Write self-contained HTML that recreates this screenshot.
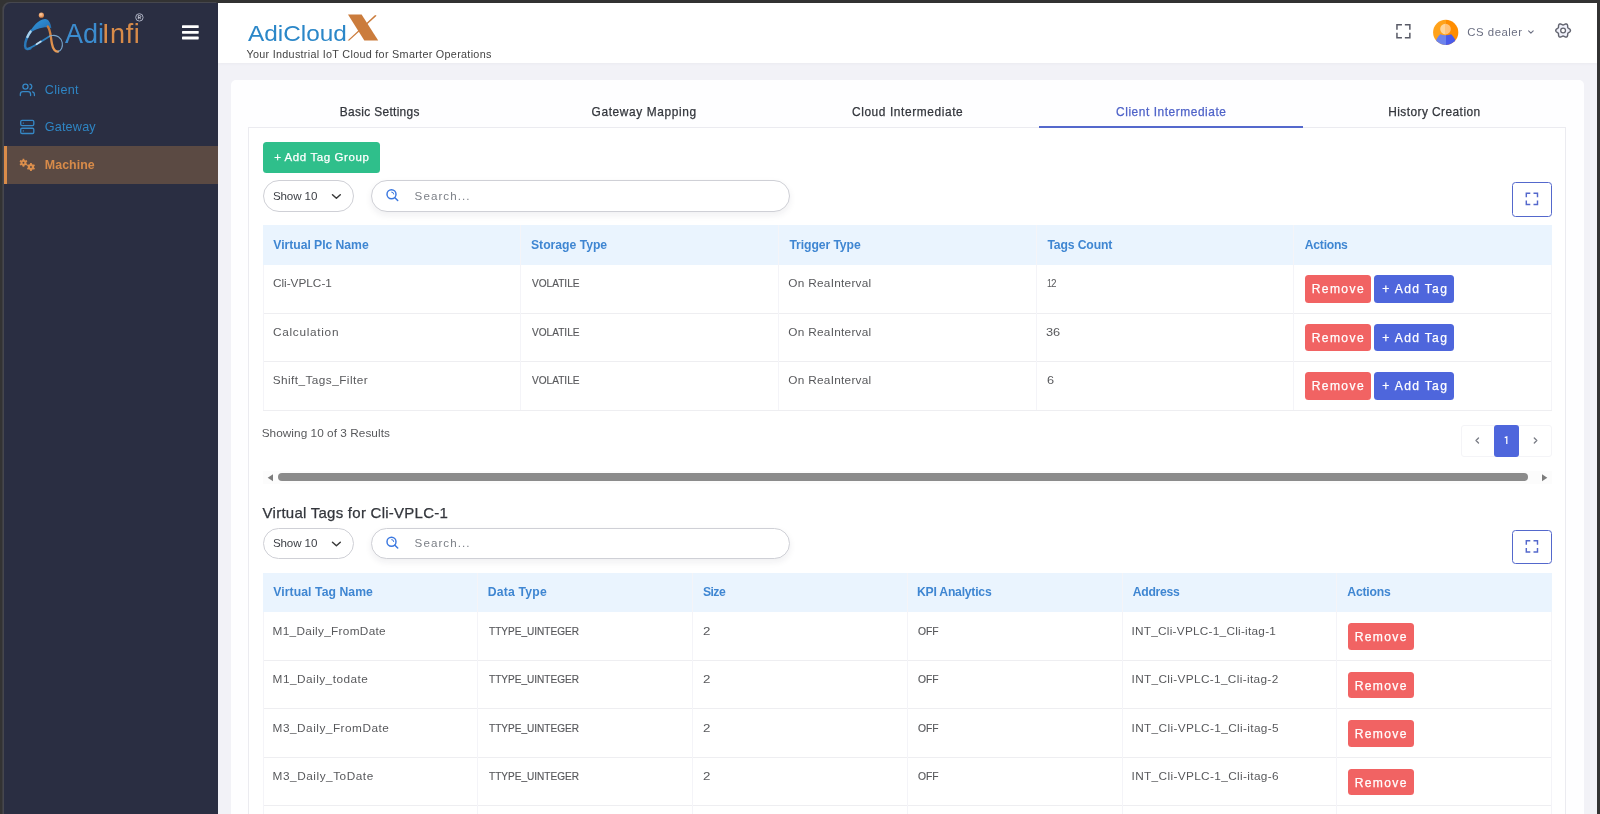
<!DOCTYPE html>
<html lang="en">
<head>
<meta charset="utf-8">
<title>AdiCloudX - Machine</title>
<style>
*{box-sizing:border-box;margin:0;padding:0}
html,body{width:1600px;height:814px;overflow:hidden;background:#333333;font-family:"Liberation Sans",sans-serif}
.abs,.t,.b{position:absolute}
.t{white-space:pre;line-height:1;font-family:"Liberation Sans",sans-serif}
.t.s{-webkit-text-stroke:0.25px currentColor}
.t.x{-webkit-text-stroke:0.18px currentColor}
#app{position:absolute;left:210px;top:2.5px;width:1386.5px;height:812px;background:#f2f2f7}
#sidebar{position:absolute;left:3.7px;top:2.8px;width:214.3px;height:812px;background:#2a2e42;border-radius:7px 0 0 0;box-shadow:-1.6px -0.9px 0 0 #46474e}
#active{position:absolute;left:3.5px;top:146px;width:214.5px;height:37.6px;background:#5b4a43}
#activebar{position:absolute;left:3.5px;top:146px;width:3.7px;height:37.6px;background:#d98c4a}
#header{position:absolute;left:218px;top:2.5px;width:1378.5px;height:60px;background:#fff;box-shadow:0 1px 3px rgba(40,40,80,0.04)}
#card{position:absolute;left:231px;top:80px;width:1352.7px;height:760px;background:#fefeff;border-radius:5px}
#panel{position:absolute;left:248px;top:127px;width:1318px;height:720px;border:1px solid #ebebf0;background:#fff}
#tabline{position:absolute;left:1039px;top:126px;width:264px;height:2px;background:#5468cc}
.btn{position:absolute;border-radius:3.5px}
.pill{position:absolute;border:1px solid #cfd0d6;border-radius:16px;background:#fff}
.fs{position:absolute;border:1px solid #5468cc;border-radius:3.5px;background:#fff}
.th{position:absolute;background:#eaf4fe}
.hl{position:absolute;height:1px;background:#eeeef1}
.vl{position:absolute;width:1px;background:#f4f4f8}
</style>
</head>
<body>
<div id="app"></div>
<div id="sidebar"></div>
<div id="active"></div><div id="activebar"></div>
<div id="header"></div>
<div id="card"></div>
<div id="panel"></div>
<div id="tabline"></div>
<div class="btn" style="left:262.50px;top:142.20px;width:117.50px;height:30.70px;background:#2fbf8b"></div>
<div class="pill" style="left:262.50px;top:180.25px;width:91.10px;height:31.35px;"></div>
<div class="pill" style="left:371.25px;top:180.25px;width:418.25px;height:31.35px;box-shadow:0 3px 7px rgba(30,30,60,0.07)"></div>
<div class="fs" style="left:1512.00px;top:182.00px;width:39.80px;height:34.80px;"></div>
<div class="pill" style="left:262.50px;top:527.75px;width:91.10px;height:31.35px;"></div>
<div class="pill" style="left:371.25px;top:527.75px;width:418.25px;height:31.35px;box-shadow:0 3px 7px rgba(30,30,60,0.07)"></div>
<div class="fs" style="left:1512.00px;top:529.50px;width:39.80px;height:34.80px;"></div>
<div class="th" style="left:263.00px;top:225.30px;width:1288.60px;height:39.40px;"></div>
<div class="hl" style="left:263.0px;top:312.70px;width:1288.60px"></div>
<div class="hl" style="left:263.0px;top:361.20px;width:1288.60px"></div>
<div class="hl" style="left:263.0px;top:409.70px;width:1288.60px"></div>
<div class="vl" style="left:262.50px;top:264.70px;height:145.50px"></div>
<div class="vl" style="left:520.22px;top:225.30px;height:184.90px"></div>
<div class="vl" style="left:777.94px;top:225.30px;height:184.90px"></div>
<div class="vl" style="left:1035.66px;top:225.30px;height:184.90px"></div>
<div class="vl" style="left:1293.38px;top:225.30px;height:184.90px"></div>
<div class="vl" style="left:1551.10px;top:264.70px;height:145.50px"></div>
<div class="btn" style="left:1304.85px;top:275.20px;width:65.95px;height:27.70px;background:#f16363"></div>
<div class="btn" style="left:1374.40px;top:275.20px;width:79.60px;height:27.70px;background:#4e66dc"></div>
<div class="btn" style="left:1304.85px;top:323.70px;width:65.95px;height:27.70px;background:#f16363"></div>
<div class="btn" style="left:1374.40px;top:323.70px;width:79.60px;height:27.70px;background:#4e66dc"></div>
<div class="btn" style="left:1304.85px;top:372.20px;width:65.95px;height:27.70px;background:#f16363"></div>
<div class="btn" style="left:1374.40px;top:372.20px;width:79.60px;height:27.70px;background:#4e66dc"></div>
<div class="abs" style="left:1461.25px;top:424.50px;width:90.50px;height:32.50px;border:1px solid #f4f4f7;border-radius:3px;background:#fff"></div>
<div class="abs" style="left:1493.75px;top:424.50px;width:25.50px;height:32.50px;background:#4e66dc;border-radius:3px"></div>
<div class="abs" style="left:263.00px;top:470.50px;width:1288.60px;height:13.50px;background:#fcfcfc"></div>
<div class="abs" style="left:277.50px;top:473.25px;width:1250.50px;height:8.00px;background:#8b8b8b;border-radius:4px"></div>
<svg class="abs" style="left:266px;top:472px" width="10" height="11" viewBox="0 0 10 11"><path d="M7.0 2.3 L7.0 9.3 L1.7 5.8 Z" fill="#7c7c7c"/></svg>
<svg class="abs" style="left:1540px;top:472px" width="10" height="11" viewBox="0 0 10 11"><path d="M2 2.3 L2 9.3 L7.3 5.8 Z" fill="#7c7c7c"/></svg>
<div class="th" style="left:263.00px;top:572.70px;width:1288.60px;height:39.10px;"></div>
<div class="hl" style="left:263.0px;top:659.80px;width:1288.60px"></div>
<div class="hl" style="left:263.0px;top:708.30px;width:1288.60px"></div>
<div class="hl" style="left:263.0px;top:756.80px;width:1288.60px"></div>
<div class="hl" style="left:263.0px;top:805.30px;width:1288.60px"></div>
<div class="vl" style="left:262.50px;top:611.80px;height:218.20px"></div>
<div class="vl" style="left:477.27px;top:572.70px;height:257.30px"></div>
<div class="vl" style="left:692.03px;top:572.70px;height:257.30px"></div>
<div class="vl" style="left:906.80px;top:572.70px;height:257.30px"></div>
<div class="vl" style="left:1121.57px;top:572.70px;height:257.30px"></div>
<div class="vl" style="left:1336.33px;top:572.70px;height:257.30px"></div>
<div class="vl" style="left:1551.10px;top:611.80px;height:218.20px"></div>
<div class="btn" style="left:1348.00px;top:623.00px;width:65.60px;height:26.70px;background:#f16363"></div>
<div class="btn" style="left:1348.00px;top:671.50px;width:65.60px;height:26.70px;background:#f16363"></div>
<div class="btn" style="left:1348.00px;top:720.00px;width:65.60px;height:26.70px;background:#f16363"></div>
<div class="btn" style="left:1348.00px;top:768.50px;width:65.60px;height:26.70px;background:#f16363"></div>
<svg class="abs" style="left:0;top:0" width="1600" height="814" viewBox="0 0 1600 814" fill="none">
<defs>
<linearGradient id="gb" x1="0" y1="0" x2="1" y2="1"><stop offset="0" stop-color="#2f9be0"/><stop offset="0.55" stop-color="#2b7fc4"/><stop offset="1" stop-color="#1d5f99"/></linearGradient>
<linearGradient id="go" x1="0" y1="0" x2="0" y2="1"><stop offset="0" stop-color="#c9793a"/><stop offset="1" stop-color="#e89b55"/></linearGradient>
<radialGradient id="gd" cx="0.4" cy="0.35" r="0.7"><stop offset="0" stop-color="#ffd2a6"/><stop offset="1" stop-color="#d5783a"/></radialGradient>
<linearGradient id="av" x1="0" y1="0" x2="1" y2="0"><stop offset="0.5" stop-color="#ffa21a"/><stop offset="0.5" stop-color="#ff8d00"/></linearGradient>
<linearGradient id="avh" x1="0" y1="0" x2="1" y2="0"><stop offset="0.5" stop-color="#ffd59a"/><stop offset="0.5" stop-color="#ffc27a"/></linearGradient>
<linearGradient id="avb" x1="0" y1="0" x2="1" y2="0"><stop offset="0.5" stop-color="#6d83ec"/><stop offset="0.5" stop-color="#4a5bea"/></linearGradient>
<clipPath id="avc"><circle cx="1445.7" cy="32.4" r="12.6"/></clipPath>
</defs>
<circle cx="41.4" cy="15.2" r="2.6" fill="url(#gd)"/>
<path d="M29.3 33.2 C32.5 26.5 38.5 19.5 44.9 19.0 C48.6 18.8 50.6 23 51.4 28.2 C48.5 27.0 46 27.0 43.5 27.4 C38.5 28.2 33.5 30.3 29.3 33.2 Z" fill="url(#gb)"/>
<path d="M31.4 30.4 C27.6 35.5 24.9 41.5 25.1 46 C25.3 49.2 27.6 49.7 30.4 48.4" stroke="#2a78b8" stroke-width="2.5" stroke-linecap="round"/>
<path d="M30.6 31.6 C29.2 33.4 28.2 35.1 27.4 36.9" stroke="#bfe0f5" stroke-width="2.4" stroke-linecap="round" opacity="0.85"/>
<path d="M27.5 48.8 C33 47.5 41 41.5 49.5 36.2" stroke="#2f80be" stroke-width="1.7" stroke-linecap="round"/>
<path d="M36.5 44.2 C38 43.3 39.4 42.4 40.8 41.5" stroke="#cfe8f8" stroke-width="1.7" stroke-linecap="round" opacity="0.9"/>
<path d="M47.8 26.5 C51 31 50.6 38 52 44 C53 49.5 55.5 52 58 51.5" stroke="url(#go)" stroke-width="2.3" stroke-linecap="round"/>
<path d="M58 51.5 C61.5 50.8 63 46.5 62.2 42.5 C61.3 38 57 34.8 52.5 35.5 C50.5 35.8 49.5 36.2 49.5 36.2" stroke="#7fb0d8" stroke-width="1.1" stroke-linecap="round" opacity="0.9"/>
<circle cx="139.4" cy="17.4" r="3.7" stroke="#a9aec0" stroke-width="1"/>
<path d="M138.3 19.2 V15.6 H139.8 A1 1 0 0 1 139.8 17.6 H138.3 M139.6 17.6 L140.6 19.2" stroke="#d8dbe6" stroke-width="0.8"/>
<rect x="182" y="25.20" width="16.7" height="2.8" rx="0.6" fill="#ffffff"/>
<rect x="182" y="30.90" width="16.7" height="2.8" rx="0.6" fill="#ffffff"/>
<rect x="182" y="36.60" width="16.7" height="2.8" rx="0.6" fill="#ffffff"/>
<g transform="translate(19.7 82.1) scale(0.64)" stroke="#3688c6" stroke-width="2" stroke-linecap="round" stroke-linejoin="round"><path d="M17 21v-2a4 4 0 0 0-4-4H5a4 4 0 0 0-4 4v2"/><circle cx="9" cy="7" r="4"/><path d="M23 21v-2a4 4 0 0 0-3-3.87"/><path d="M16 3.13a4 4 0 0 1 0 7.75"/></g>
<g transform="translate(19.4 119.1) scale(0.655)" stroke="#3688c6" stroke-width="2" stroke-linecap="round" stroke-linejoin="round"><rect x="2" y="2" width="20" height="8" rx="2" ry="2"/><rect x="2" y="14" width="20" height="8" rx="2" ry="2"/><line x1="6" y1="6" x2="6.01" y2="6"/><line x1="6" y1="18" x2="6.01" y2="18"/></g>
<path d="M24.41 165.64 L24.26 166.82 L22.64 166.82 L22.49 165.64 L21.47 165.05 L20.37 165.51 L19.56 164.11 L20.51 163.39 L20.51 162.21 L19.56 161.49 L20.37 160.09 L21.47 160.55 L22.49 159.96 L22.64 158.78 L24.26 158.78 L24.41 159.96 L25.43 160.55 L26.53 160.09 L27.34 161.49 L26.39 162.21 L26.39 163.39 L27.34 164.11 L26.53 165.51 L25.43 165.05 Z M24.40 162.80 A0.95 0.95 0 1 0 22.50 162.80 A0.95 0.95 0 1 0 24.40 162.80 Z" fill="#dd8f4c" fill-rule="evenodd"/>
<path d="M31.94 169.94 L31.78 171.12 L30.12 171.12 L29.96 169.94 L28.90 169.33 L27.80 169.78 L26.97 168.34 L27.91 167.61 L27.91 166.39 L26.97 165.66 L27.80 164.22 L28.90 164.67 L29.96 164.06 L30.12 162.88 L31.78 162.88 L31.94 164.06 L33.00 164.67 L34.10 164.22 L34.93 165.66 L33.99 166.39 L33.99 167.61 L34.93 168.34 L34.10 169.78 L33.00 169.33 Z M31.90 167.00 A0.95 0.95 0 1 0 30.00 167.00 A0.95 0.95 0 1 0 31.90 167.00 Z" fill="#dd8f4c" fill-rule="evenodd"/>
<path d="M348 14.5 L361.6 14.5 L378.2 40.5 L364.3 40.5 Z" fill="#cb7c3c"/>
<path d="M375.1 14.9 L376.6 15.7 L349.3 40.6 L347.6 40.6 Z" fill="#cb7c3c"/>
<path d="M1396.95 29.75 V24.75 H1401.95 M1404.8500000000001 24.75 H1409.8500000000001 V29.75 M1409.8500000000001 32.65 V37.65 H1404.8500000000001 M1401.95 37.65 H1396.95 V32.65" stroke="#595b67" stroke-width="1.5" stroke-linejoin="miter"/>
<circle cx="1445.7" cy="32.4" r="12.6" fill="url(#av)"/>
<g clip-path="url(#avc)"><path d="M1440.2 34.3 Q1445.7 36 1451.2 34.3 Q1455.5 38 1457.5 47 L1434 47 Q1436 38 1440.2 34.3 Z" fill="url(#avb)"/></g>
<circle cx="1445.5" cy="29.1" r="5.3" fill="url(#avh)"/>
<path d="M1528.6 30.8 L1530.9 33.1 L1533.2 30.8" stroke="#6b6f82" stroke-width="1.1" stroke-linecap="round" stroke-linejoin="round"/>
<path d="M1570.47 30.50 L1570.43 30.82 L1570.32 31.13 L1570.14 31.43 L1569.91 31.70 L1569.63 31.95 L1569.33 32.17 L1569.02 32.37 L1568.73 32.55 L1568.46 32.72 L1568.22 32.89 L1568.03 33.07 L1567.89 33.27 L1567.79 33.49 L1567.73 33.74 L1567.70 34.03 L1567.69 34.35 L1567.68 34.70 L1567.66 35.06 L1567.62 35.43 L1567.54 35.79 L1567.42 36.13 L1567.26 36.44 L1567.04 36.69 L1566.78 36.88 L1566.49 37.01 L1566.16 37.07 L1565.82 37.06 L1565.46 36.99 L1565.11 36.88 L1564.77 36.73 L1564.44 36.56 L1564.14 36.40 L1563.86 36.25 L1563.59 36.13 L1563.34 36.06 L1563.10 36.03 L1562.86 36.06 L1562.61 36.13 L1562.34 36.25 L1562.06 36.40 L1561.76 36.56 L1561.43 36.73 L1561.09 36.88 L1560.74 36.99 L1560.38 37.06 L1560.04 37.07 L1559.71 37.01 L1559.41 36.88 L1559.16 36.69 L1558.94 36.44 L1558.78 36.13 L1558.66 35.79 L1558.58 35.43 L1558.54 35.06 L1558.52 34.70 L1558.51 34.35 L1558.50 34.03 L1558.47 33.74 L1558.41 33.49 L1558.31 33.27 L1558.17 33.07 L1557.98 32.89 L1557.74 32.72 L1557.47 32.55 L1557.18 32.37 L1556.87 32.17 L1556.57 31.95 L1556.29 31.70 L1556.06 31.43 L1555.88 31.13 L1555.77 30.82 L1555.73 30.50 L1555.77 30.18 L1555.88 29.87 L1556.06 29.57 L1556.29 29.30 L1556.57 29.05 L1556.87 28.83 L1557.18 28.63 L1557.47 28.45 L1557.74 28.28 L1557.98 28.11 L1558.17 27.93 L1558.31 27.73 L1558.41 27.51 L1558.47 27.26 L1558.50 26.97 L1558.51 26.65 L1558.52 26.30 L1558.54 25.94 L1558.58 25.57 L1558.66 25.21 L1558.78 24.87 L1558.94 24.56 L1559.16 24.31 L1559.41 24.12 L1559.71 23.99 L1560.04 23.93 L1560.38 23.94 L1560.74 24.01 L1561.09 24.12 L1561.43 24.27 L1561.76 24.44 L1562.06 24.60 L1562.34 24.75 L1562.61 24.87 L1562.86 24.94 L1563.10 24.97 L1563.34 24.94 L1563.59 24.87 L1563.86 24.75 L1564.14 24.60 L1564.44 24.44 L1564.77 24.27 L1565.11 24.12 L1565.46 24.01 L1565.82 23.94 L1566.16 23.93 L1566.49 23.99 L1566.78 24.12 L1567.04 24.31 L1567.26 24.56 L1567.42 24.87 L1567.54 25.21 L1567.62 25.57 L1567.66 25.94 L1567.68 26.30 L1567.69 26.65 L1567.70 26.97 L1567.73 27.26 L1567.79 27.51 L1567.89 27.74 L1568.03 27.93 L1568.22 28.11 L1568.46 28.28 L1568.73 28.45 L1569.02 28.63 L1569.33 28.83 L1569.63 29.05 L1569.91 29.30 L1570.14 29.57 L1570.32 29.87 L1570.43 30.18 Z" stroke="#62646f" stroke-width="1.4" fill="#f1f2fb" stroke-linejoin="round"/>
<circle cx="1563.1" cy="30.5" r="2.4" stroke="#62646f" stroke-width="1.3" fill="#fff"/>
<path d="M332.5 194.7 L336.4 198.2 L340.3 194.7" stroke="#3a3a3a" stroke-width="1.5" stroke-linecap="round" stroke-linejoin="round"/>
<circle cx="391.5" cy="194.3" r="4.5" stroke="#3b78e0" stroke-width="1.45"/>
<path d="M394.9 197.7 L397.7 200.5" stroke="#3b78e0" stroke-width="1.5" stroke-linecap="round"/>
<path d="M391.3 192.1 A2.3 2.3 0 0 1 393.7 194.4" stroke="#3b78e0" stroke-width="1"/>
<path d="M332.5 542.2 L336.4 545.7 L340.3 542.2" stroke="#3a3a3a" stroke-width="1.5" stroke-linecap="round" stroke-linejoin="round"/>
<circle cx="391.5" cy="541.8" r="4.5" stroke="#3b78e0" stroke-width="1.45"/>
<path d="M394.9 545.2 L397.7 548.0" stroke="#3b78e0" stroke-width="1.5" stroke-linecap="round"/>
<path d="M391.3 539.6 A2.3 2.3 0 0 1 393.7 541.9" stroke="#3b78e0" stroke-width="1"/>
<path d="M1526.3000000000002 197.3 V193.3 H1530.3000000000002 M1533.5 193.3 H1537.5 V197.3 M1537.5 200.5 V204.5 H1533.5 M1530.3000000000002 204.5 H1526.3000000000002 V200.5" stroke="#5468cc" stroke-width="1.45" stroke-linejoin="miter"/>
<path d="M1526.3000000000002 544.8 V540.8 H1530.3000000000002 M1533.5 540.8 H1537.5 V544.8 M1537.5 548.0 V552.0 H1533.5 M1530.3000000000002 552.0 H1526.3000000000002 V548.0" stroke="#5468cc" stroke-width="1.45" stroke-linejoin="miter"/>
<path d="M1478.5 438.0 L1476 440.5 L1478.5 443.0" stroke="#7a7d86" stroke-width="1.35" stroke-linecap="round" stroke-linejoin="round"/>
<path d="M1534.3 438.0 L1536.8 440.5 L1534.3 443.0" stroke="#7a7d86" stroke-width="1.35" stroke-linecap="round" stroke-linejoin="round"/>
<path d="M1504.7 437.7 L1506.8 436.9 L1506.8 444.0" stroke="#ffffff" stroke-width="1.25" stroke-linejoin="miter"/>
</svg>
<div id="txt" style="position:absolute;left:0;top:0;width:1600px;height:814px;will-change:transform;opacity:0.999">
<span class="t" style="left:44.71px;top:84.13px;font-size:12.6px;color:#2f86c5;letter-spacing:0.342px;">Client</span>
<span class="t" style="left:44.68px;top:121.23px;font-size:12.6px;color:#2f86c5;letter-spacing:0.215px;">Gateway</span>
<span class="t" style="left:44.82px;top:158.60px;font-size:12.4px;color:#d98c4a;letter-spacing:0.056px;font-weight:700;">Machine</span>
<span class="t" style="left:65.09px;top:21.24px;font-size:27.0px;color:#3c8dd0;letter-spacing:-0.104px;">Adi</span>
<span class="t" style="left:102.09px;top:21.24px;font-size:27.0px;color:#d98c4a;letter-spacing:0.531px;">Infi</span>
<span class="t" style="left:247.81px;top:22.87px;font-size:22.6px;color:#2b87c8;letter-spacing:0.000px;transform:scaleX(1.0778);transform-origin:0 0;">AdiCloud</span>
<span class="t" style="left:246.40px;top:48.86px;font-size:10.8px;color:#444;letter-spacing:0.296px;">Your Industrial IoT Cloud for Smarter Operations</span>
<span class="t" style="left:1467.36px;top:26.75px;font-size:11.4px;color:#6b6f82;letter-spacing:0.495px;">CS dealer</span>
<span class="t s" style="left:339.87px;top:106.68px;font-size:11.9px;color:#33363c;letter-spacing:0.324px;">Basic Settings</span>
<span class="t s" style="left:591.54px;top:106.68px;font-size:11.9px;color:#33363c;letter-spacing:0.626px;">Gateway Mapping</span>
<span class="t s" style="left:851.97px;top:106.68px;font-size:11.9px;color:#33363c;letter-spacing:0.602px;">Cloud Intermediate</span>
<span class="t s" style="left:1116.09px;top:106.68px;font-size:11.9px;color:#4f63c8;letter-spacing:0.557px;">Client Intermediate</span>
<span class="t s" style="left:1388.14px;top:106.68px;font-size:11.9px;color:#33363c;letter-spacing:0.452px;">History Creation</span>
<span class="t s" style="left:274.13px;top:152.27px;font-size:11.5px;color:#fff;letter-spacing:0.589px;">+ Add Tag Group</span>
<span class="t" style="left:272.90px;top:190.08px;font-size:11.6px;color:#3c3f45;letter-spacing:-0.113px;">Show 10</span>
<span class="t" style="left:414.61px;top:189.93px;font-size:11.6px;color:#7b7f86;letter-spacing:1.057px;">Search...</span>
<span class="t" style="left:272.90px;top:536.78px;font-size:11.6px;color:#3c3f45;letter-spacing:-0.113px;">Show 10</span>
<span class="t" style="left:414.61px;top:537.43px;font-size:11.6px;color:#7b7f86;letter-spacing:1.057px;">Search...</span>
<span class="t" style="left:273.36px;top:239.37px;font-size:12.2px;color:#3f86d2;letter-spacing:-0.043px;font-weight:700;">Virtual Plc Name</span>
<span class="t" style="left:530.97px;top:239.37px;font-size:12.2px;color:#3f86d2;letter-spacing:-0.011px;font-weight:700;">Storage Type</span>
<span class="t" style="left:789.41px;top:239.37px;font-size:12.2px;color:#3f86d2;letter-spacing:-0.089px;font-weight:700;">Trigger Type</span>
<span class="t" style="left:1047.41px;top:239.37px;font-size:12.2px;color:#3f86d2;letter-spacing:-0.136px;font-weight:700;">Tags Count</span>
<span class="t" style="left:1304.85px;top:239.37px;font-size:12.2px;color:#3f86d2;letter-spacing:-0.276px;font-weight:700;">Actions</span>
<span class="t" style="left:272.93px;top:278.01px;font-size:11.8px;color:#58595c;letter-spacing:-0.005px;">Cli-VPLC-1</span>
<span class="t x" style="left:531.56px;top:278.01px;font-size:11.8px;color:#58595c;letter-spacing:0.000px;transform:scaleX(0.8555);transform-origin:0 0;">VOLATILE</span>
<span class="t" style="left:788.34px;top:278.01px;font-size:11.8px;color:#58595c;letter-spacing:0.275px;">On ReaInterval</span>
<span class="t" style="left:1046.74px;top:278.01px;font-size:11.8px;color:#58595c;letter-spacing:-2.241px;transform:scaleX(0.72);transform-origin:0 0;">1</span>
<span class="t" style="left:1050.94px;top:278.01px;font-size:11.8px;color:#58595c;letter-spacing:-0.591px;transform:scaleX(0.84);transform-origin:0 0;">2</span>
<span class="t s" style="left:1311.71px;top:283.26px;font-size:12.1px;color:#fff;letter-spacing:1.379px;">Remove</span>
<span class="t s" style="left:1382.34px;top:283.26px;font-size:12.1px;color:#fff;letter-spacing:1.331px;">+ Add Tag</span>
<span class="t" style="left:272.93px;top:326.51px;font-size:11.8px;color:#58595c;letter-spacing:0.716px;">Calculation</span>
<span class="t x" style="left:531.56px;top:326.51px;font-size:11.8px;color:#58595c;letter-spacing:0.000px;transform:scaleX(0.8555);transform-origin:0 0;">VOLATILE</span>
<span class="t" style="left:788.34px;top:326.51px;font-size:11.8px;color:#58595c;letter-spacing:0.275px;">On ReaInterval</span>
<span class="t" style="left:1046.36px;top:326.51px;font-size:11.8px;color:#58595c;letter-spacing:0.000px;transform:scaleX(1.0848);transform-origin:0 0;">36</span>
<span class="t s" style="left:1311.71px;top:331.76px;font-size:12.1px;color:#fff;letter-spacing:1.379px;">Remove</span>
<span class="t s" style="left:1382.34px;top:331.76px;font-size:12.1px;color:#fff;letter-spacing:1.331px;">+ Add Tag</span>
<span class="t" style="left:272.70px;top:375.01px;font-size:11.8px;color:#58595c;letter-spacing:0.441px;">Shift_Tags_Filter</span>
<span class="t x" style="left:531.56px;top:375.01px;font-size:11.8px;color:#58595c;letter-spacing:0.000px;transform:scaleX(0.8555);transform-origin:0 0;">VOLATILE</span>
<span class="t" style="left:788.34px;top:375.01px;font-size:11.8px;color:#58595c;letter-spacing:0.275px;">On ReaInterval</span>
<span class="t" style="left:1047.04px;top:375.01px;font-size:11.8px;color:#58595c;letter-spacing:0.759px;transform:scaleX(1.08);transform-origin:0 0;">6</span>
<span class="t s" style="left:1311.71px;top:380.26px;font-size:12.1px;color:#fff;letter-spacing:1.379px;">Remove</span>
<span class="t s" style="left:1382.34px;top:380.26px;font-size:12.1px;color:#fff;letter-spacing:1.331px;">+ Add Tag</span>
<span class="t" style="left:261.70px;top:428.01px;font-size:11.8px;color:#58595c;letter-spacing:0.043px;">Showing 10 of 3 Results</span>
<span class="t s" style="left:262.62px;top:504.80px;font-size:15.0px;color:#33363c;letter-spacing:0.251px;">Virtual Tags for Cli-VPLC-1</span>
<span class="t" style="left:273.32px;top:586.47px;font-size:12.2px;color:#3f86d2;letter-spacing:0.077px;font-weight:700;">Virtual Tag Name</span>
<span class="t" style="left:487.77px;top:586.47px;font-size:12.2px;color:#3f86d2;letter-spacing:0.196px;font-weight:700;">Data Type</span>
<span class="t" style="left:702.97px;top:586.47px;font-size:12.2px;color:#3f86d2;letter-spacing:-0.560px;font-weight:700;">Size</span>
<span class="t" style="left:917.01px;top:586.47px;font-size:12.2px;color:#3f86d2;letter-spacing:-0.231px;font-weight:700;">KPI Analytics</span>
<span class="t" style="left:1132.85px;top:586.47px;font-size:12.2px;color:#3f86d2;letter-spacing:-0.321px;font-weight:700;">Address</span>
<span class="t" style="left:1347.32px;top:586.47px;font-size:12.2px;color:#3f86d2;letter-spacing:-0.223px;font-weight:700;">Actions</span>
<span class="t" style="left:272.62px;top:625.51px;font-size:11.8px;color:#58595c;letter-spacing:0.305px;">M1_Daily_FromDate</span>
<span class="t x" style="left:488.55px;top:625.51px;font-size:11.8px;color:#58595c;letter-spacing:0.000px;transform:scaleX(0.8523);transform-origin:0 0;">TTYPE_UINTEGER</span>
<span class="t" style="left:702.79px;top:625.51px;font-size:11.8px;color:#58595c;letter-spacing:0.000px;transform:scaleX(1.1289);transform-origin:0 0;">2</span>
<span class="t x" style="left:917.75px;top:625.51px;font-size:11.8px;color:#58595c;letter-spacing:0.000px;transform:scaleX(0.8742);transform-origin:0 0;">OFF</span>
<span class="t" style="left:1131.50px;top:625.51px;font-size:11.8px;color:#58595c;letter-spacing:0.252px;">INT_Cli-VPLC-1_Cli-itag-1</span>
<span class="t s" style="left:1354.71px;top:631.06px;font-size:12.1px;color:#fff;letter-spacing:1.347px;">Remove</span>
<span class="t" style="left:272.62px;top:674.01px;font-size:11.8px;color:#58595c;letter-spacing:0.478px;">M1_Daily_todate</span>
<span class="t x" style="left:488.55px;top:674.01px;font-size:11.8px;color:#58595c;letter-spacing:0.000px;transform:scaleX(0.8523);transform-origin:0 0;">TTYPE_UINTEGER</span>
<span class="t" style="left:702.79px;top:674.01px;font-size:11.8px;color:#58595c;letter-spacing:0.000px;transform:scaleX(1.1289);transform-origin:0 0;">2</span>
<span class="t x" style="left:917.75px;top:674.01px;font-size:11.8px;color:#58595c;letter-spacing:0.000px;transform:scaleX(0.8742);transform-origin:0 0;">OFF</span>
<span class="t" style="left:1131.50px;top:674.01px;font-size:11.8px;color:#58595c;letter-spacing:0.349px;">INT_Cli-VPLC-1_Cli-itag-2</span>
<span class="t s" style="left:1354.71px;top:679.56px;font-size:12.1px;color:#fff;letter-spacing:1.347px;">Remove</span>
<span class="t" style="left:272.62px;top:722.51px;font-size:11.8px;color:#58595c;letter-spacing:0.506px;">M3_Daily_FromDate</span>
<span class="t x" style="left:488.55px;top:722.51px;font-size:11.8px;color:#58595c;letter-spacing:0.000px;transform:scaleX(0.8523);transform-origin:0 0;">TTYPE_UINTEGER</span>
<span class="t" style="left:702.79px;top:722.51px;font-size:11.8px;color:#58595c;letter-spacing:0.000px;transform:scaleX(1.1289);transform-origin:0 0;">2</span>
<span class="t x" style="left:917.75px;top:722.51px;font-size:11.8px;color:#58595c;letter-spacing:0.000px;transform:scaleX(0.8742);transform-origin:0 0;">OFF</span>
<span class="t" style="left:1131.50px;top:722.51px;font-size:11.8px;color:#58595c;letter-spacing:0.368px;">INT_Cli-VPLC-1_Cli-itag-5</span>
<span class="t s" style="left:1354.71px;top:728.06px;font-size:12.1px;color:#fff;letter-spacing:1.347px;">Remove</span>
<span class="t" style="left:272.62px;top:771.01px;font-size:11.8px;color:#58595c;letter-spacing:0.538px;">M3_Daily_ToDate</span>
<span class="t x" style="left:488.55px;top:771.01px;font-size:11.8px;color:#58595c;letter-spacing:0.000px;transform:scaleX(0.8523);transform-origin:0 0;">TTYPE_UINTEGER</span>
<span class="t" style="left:702.79px;top:771.01px;font-size:11.8px;color:#58595c;letter-spacing:0.000px;transform:scaleX(1.1289);transform-origin:0 0;">2</span>
<span class="t x" style="left:917.75px;top:771.01px;font-size:11.8px;color:#58595c;letter-spacing:0.000px;transform:scaleX(0.8742);transform-origin:0 0;">OFF</span>
<span class="t" style="left:1131.50px;top:771.01px;font-size:11.8px;color:#58595c;letter-spacing:0.368px;">INT_Cli-VPLC-1_Cli-itag-6</span>
<span class="t s" style="left:1354.71px;top:776.56px;font-size:12.1px;color:#fff;letter-spacing:1.347px;">Remove</span>
</div>
</body>
</html>
